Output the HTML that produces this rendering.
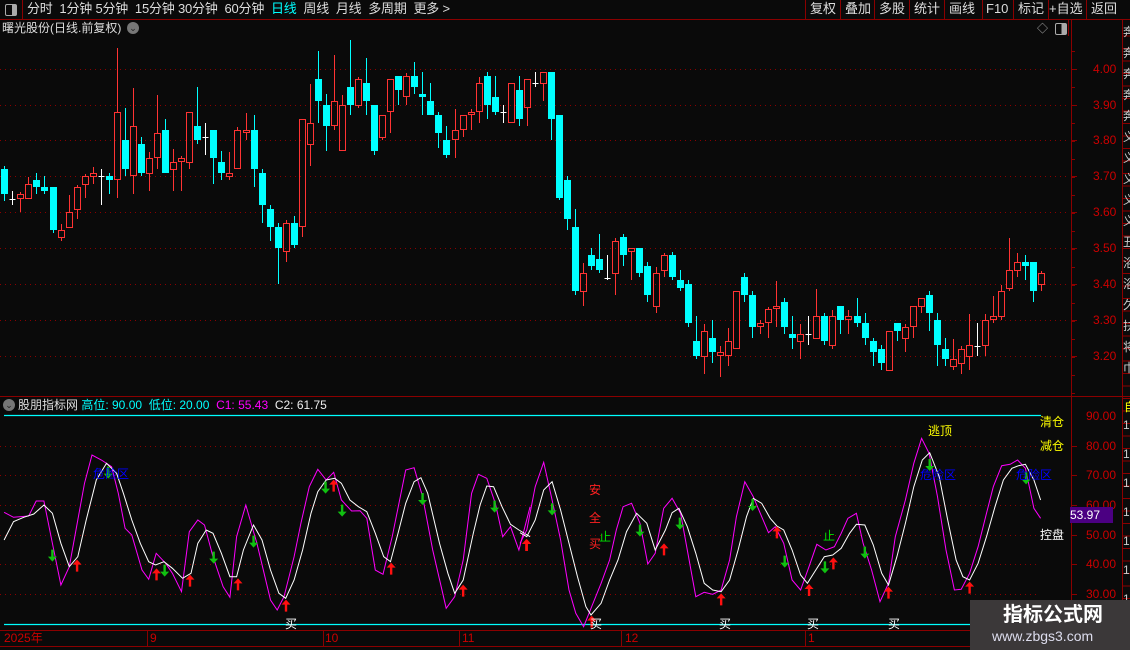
<!DOCTYPE html>
<html><head><meta charset="utf-8">
<style>
html,body{margin:0;padding:0;background:#0a0a0a;overflow:hidden}
body{width:1130px;height:650px;position:relative;font-family:"Liberation Sans","Noto Sans CJK SC",sans-serif}
.t{position:absolute;white-space:nowrap;font-size:12px;line-height:14px}
svg{position:absolute;left:0;top:0}
</style></head><body>
<svg id="s" width="1130" height="650" viewBox="0 0 1130 650"></svg>

<!-- top bar -->
<div class="t" style="left:0;top:0;width:22px;height:19px;border-right:1px solid #8b0000"></div>
<div class="t" style="left:5px;top:4px;width:10px;height:10px;border:1px solid #aaa;border-radius:2px;background:linear-gradient(90deg,#0a0a0a 60%,#aaa 60%)"></div>
<div class="t" style="left:27px;top:2px;color:#ddd;font-size:13px;letter-spacing:-0.2px">分时&nbsp; 1分钟&nbsp;5分钟&nbsp; 15分钟&nbsp;30分钟&nbsp; 60分钟&nbsp; <span style="color:#00ffff">日线</span>&nbsp; 周线&nbsp; 月线&nbsp; 多周期&nbsp; 更多 &gt;</div>
<div class="t" style="left:806px;top:2px;color:#ddd;font-size:13px">
<span style="position:absolute;left:4px">复权</span><span style="position:absolute;left:39px">叠加</span><span style="position:absolute;left:73px">多股</span><span style="position:absolute;left:108px">统计</span><span style="position:absolute;left:143px">画线</span><span style="position:absolute;left:180px">F10</span><span style="position:absolute;left:212px">标记</span><span style="position:absolute;left:243px">+自选</span><span style="position:absolute;left:285px">返回</span></div>
<div class="t" style="left:2px;top:21px;color:#ddd;font-size:12px">曙光股份(日线.前复权)</div>
<div class="t" style="left:127px;top:22px;width:12px;height:12px;border-radius:50%;background:#777;color:#222;font-size:9px;line-height:12px;text-align:center">⌄</div>
<div class="t" style="left:1037px;top:22px;color:#aaa;font-size:11px">◇</div>
<div class="t" style="left:1055px;top:23px;width:10px;height:10px;border:1px solid #aaa;border-radius:2px;background:linear-gradient(90deg,#0a0a0a 55%,#aaa 55%)"></div>

<!-- indicator header -->
<div class="t" style="left:3px;top:399px;width:12px;height:12px;border-radius:50%;background:#777;color:#222;font-size:9px;line-height:12px;text-align:center">⌄</div>
<div class="t" style="left:18px;top:398px;color:#ddd">股朋指标网 <span style="color:#00ffff">高位: 90.00&nbsp; 低位: 20.00</span>&nbsp; <span style="color:#ff00ff">C1: 55.43</span>&nbsp; <span style="color:#eee">C2: 61.75</span></div>

<!-- indicator labels -->
<div class="t" style="left:1040px;top:415px;color:#ffff00">清仓</div>
<div class="t" style="left:1040px;top:439px;color:#ffff00">减仓</div>
<div class="t" style="left:1040px;top:528px;color:#fff">控盘</div>
<div class="t" style="left:928px;top:424px;color:#ffff00">逃顶</div>
<div class="t" style="left:93px;top:467px;color:#0000ff">危险区</div>
<div class="t" style="left:920px;top:468px;color:#0000ff">危险区</div>
<div class="t" style="left:1016px;top:468px;color:#0000ff">危险区</div>
<div class="t" style="left:589px;top:483px;color:#ff2020">安</div>
<div class="t" style="left:589px;top:511px;color:#ff2020">全</div>
<div class="t" style="left:589px;top:537px;color:#ff2020">买</div>
<div class="t" style="left:599px;top:530px;color:#00e000">止</div>
<div class="t" style="left:823px;top:529px;color:#00e000">止</div>
<div class="t" style="left:285px;top:617px;color:#fff">买</div>
<div class="t" style="left:590px;top:617px;color:#fff">买</div>
<div class="t" style="left:719px;top:617px;color:#fff">买</div>
<div class="t" style="left:807px;top:617px;color:#fff">买</div>
<div class="t" style="left:888px;top:617px;color:#fff">买</div>

<!-- date axis -->
<div class="t" style="left:4px;top:631px;color:#cc0000">2025年</div>
<div class="t" style="left:150px;top:631px;color:#cc0000">9</div>
<div class="t" style="left:325px;top:631px;color:#cc0000">10</div>
<div class="t" style="left:462px;top:631px;color:#cc0000">11</div>
<div class="t" style="left:625px;top:631px;color:#cc0000">12</div>
<div class="t" style="left:808px;top:631px;color:#cc0000">1</div>

<!-- right axis -->
<div id="ax"></div>
<div id="strip" style="position:absolute;left:1123px;top:20px;width:7px;height:630px;overflow:hidden"></div>
<div class="t" style="left:1070px;top:507px;width:43px;height:16px;background:#4b0082;color:#fff;font-size:12px;line-height:16px">53.97</div>

<!-- watermark -->
<div class="t" style="left:970px;top:600px;width:160px;height:50px;background:#3b3839"></div>
<div class="t" style="left:1003px;top:603px;color:#fff;font-size:20px;line-height:24px;font-weight:bold">指标公式网</div>
<div class="t" style="left:992px;top:627px;color:#dde;font-size:14px;line-height:18px">www.zbgs3.com</div>

<script>
var S=[];
function L(x1,y1,x2,y2,c,w,d){S.push('<line x1="'+x1+'" y1="'+y1+'" x2="'+x2+'" y2="'+y2+'" stroke="'+c+'" stroke-width="'+(w||1)+'"'+(d?' stroke-dasharray="'+d+'"':'')+'/>');}
L(0,19.5,1130,19.5,'#8b0000');
[805,840,874,909,944,982,1013,1048,1086].forEach(function(x){L(x+.5,0,x+.5,19,'#8b0000');});
L(0,396.5,1130,396.5,'#8b0000');
L(1071.5,20,1071.5,650,'#8b0000');
L(1122.5,20,1122.5,650,'#8b0000');
L(1068.5,20,1068.5,36,'#8b0000');
L(0,630.5,1071,630.5,'#8b0000');L(0,646.5,1071,646.5,'#8b0000');
[147,323,459,621,805].forEach(function(x){L(x+.5,630,x+.5,646,'#8b0000');});
var py=[69,105,140,176,212,248,284,320,356];
py.forEach(function(y){L(0,y+.5,1068,y+.5,'#8b0000',1,'1,4');L(1071,y+.5,1077,y+.5,'#8b0000');});
for(var y=51;y<396;y+=18){L(1071,y+.5,1075,y+.5,'#8b0000');}
var iy=[446,475,505,535,564,594];
iy.forEach(function(y){L(0,y+.5,1040,y+.5,'#8b0000',1,'1,4');L(1071,y+.5,1077,y+.5,'#8b0000');});
for(var y=36;y<650;y+=12.5){L(1122,y,1130,y,'#8b0000');}
L(4,415.5,1041,415.5,'#00ffff',1.3);L(4,624.5,1068,624.5,'#00ffff',1.3);
var C=[['c',169,194,166,201],['w',199,199,191,205],['r',194,199,192,212],['r',184,199,177,199],['c',180,187,173,194],['c',187,191,176,194],['c',187,230,187,233],['r',230,238,224,241],['r',212,228,195,228],['r',187,210,185,219],['r',176,185,174,198],['r',173,177,167,184],['w',176,176,169,205],['c',176,180,173,194],['r',112,180,48,198],['c',140,169,108,176],['r',126,176,88,194],['c',144,173,137,176],['r',158,174,152,191],['r',133,158,95,169],['c',130,173,119,173],['r',162,170,149,191],['r',158,162,156,191],['r',112,163,112,169],['c',126,140,87,144],['w',137,137,123,155],['c',130,158,130,184],['c',162,173,151,180],['r',173,177,152,180],['r',130,169,127,169],['r',130,133,113,140],['c',130,169,115,187],['c',173,205,169,223],['c',209,227,205,241],['c',227,248,223,284],['r',223,252,220,262],['c',223,245,216,248],['r',119,227,119,237],['r',123,145,84,166],['c',79,101,51,123],['c',105,126,94,151],['r',101,126,55,130],['r',105,151,95,151],['c',87,105,40,115],['r',79,106,77,108],['c',83,101,58,115],['c',105,151,105,155],['r',115,138,115,140],['r',79,112,79,133],['c',76,90,76,105],['r',76,97,73,105],['c',76,87,62,94],['c',94,97,72,115],['c',101,115,83,115],['c',115,133,112,148],['c',140,155,126,158],['r',130,140,109,158],['r',115,130,115,137],['r',112,115,109,130],['r',83,112,77,123],['c',76,105,72,119],['c',97,112,76,115],['w',112,112,105,123],['r',83,123,83,123],['c',90,119,76,126],['r',79,108,79,126],['w',83,83,72,87],['r',72,84,72,101],['c',72,119,72,140],['c',115,198,115,200],['c',180,219,176,230],['c',227,291,209,295],['r',273,292,263,306],['c',255,266,248,270],['c',259,270,234,273],['w',278,278,255,280],['r',241,274,238,295],['c',237,255,234,266],['r',248,252,248,280],['c',248,273,248,277],['c',266,295,262,302],['r',273,307,267,313],['r',255,271,253,277],['c',255,277,252,280],['c',280,288,270,291],['c',284,323,280,327],['c',341,356,316,359],['r',331,357,324,374],['c',338,352,320,363],['r',352,356,346,377],['r',341,356,328,366],['r',291,349,291,349],['c',277,295,273,302],['c',295,327,291,338],['r',323,327,320,334],['r',309,323,307,338],['r',306,309,281,327],['c',302,327,298,334],['c',334,338,316,349],['r',334,342,324,359],['w',334,334,316,345],['r',316,339,289,339],['c',316,341,313,345],['r',316,346,310,349],['c',306,320,306,334],['r',316,320,310,334],['c',316,323,298,327],['c',323,338,313,345],['c',341,352,338,366],['c',349,363,345,370],['r',331,371,331,371],['c',323,331,323,341],['r',327,339,324,352],['r',306,327,306,338],['r',298,307,298,313],['c',295,313,291,331],['c',320,345,313,366],['c',349,359,338,366],['r',359,367,339,370],['r',349,364,346,374],['r',345,357,314,370],['w',346,346,323,356],['r',320,346,314,356],['r',316,320,296,323],['r',291,317,285,320],['r',270,289,238,291],['r',262,271,253,277],['c',262,266,255,280],['c',262,291,262,302],['r',273,285,271,291]];
C.forEach(function(k,i){var x=Math.round(4.3+8.04*i)+.5;var col=k[0]=='c'?'#00ffff':k[0]=='r'?'#ff3333':'#ffffff';
 if(k[3]<k[1])L(x,k[3],x,k[1],col);if(k[4]>k[2])L(x,k[2],x,k[4],col);
 if(k[0]=='w'){L(x-3,k[1]+.5,x+3,k[1]+.5,col);}
 else if(k[0]=='c'){S.push('<rect x="'+(x-3.5)+'" y="'+k[1]+'" width="7" height="'+Math.max(1,k[2]-k[1])+'" fill="#00ffff"/>');}
 else{S.push('<rect x="'+(x-3)+'" y="'+(k[1]+.5)+'" width="6" height="'+Math.max(1,k[2]-k[1]-1)+'" fill="none" stroke="#ff3333"/>');}
});
function P(pts,x0,c){var s=pts.map(function(p){return (x0+p[0]/2.958).toFixed(1)+','+(410+p[1]/3).toFixed(1)}).join(' ');S.push('<polyline points="'+s+'" fill="none" stroke="'+c+'" stroke-width="1"/>');}
P([[12,307],[40,322],[85,318],[107,273],[130,273],[155,400],[180,525],[205,470],[230,330],[250,220],[272,135],[300,150],[330,170],[350,250],[370,355],[390,375],[420,480],[440,508],[462,430],[490,460],[510,490],[537,545],[560,365],[585,330],[605,345],[630,440],[660,530],[680,562],[700,380],[727,285],[760,400],[800,570],[820,600],[840,560],[870,440],[890,340],[915,230],[940,178],[965,210],[987,187],[1010,270],[1040,303],[1065,302],[1085,325],[1110,480],[1133,493],[1160,380],[1200,180],[1225,173],[1250,260],[1280,420],[1320,595],[1345,560],[1370,450],[1395,250],[1415,193],[1440,205],[1465,280],[1487,380],[1510,350],[1535,420],[1568,290]],0,'#ff00ff');
P([[12,390],[40,335],[70,322],[100,312],[130,285],[155,310],[180,400],[205,470],[230,440],[255,330],[285,210],[315,160],[345,190],[365,250],[390,330],[415,400],[440,455],[460,465],[485,455],[510,475],[540,505],[565,490],[585,400],[610,360],[630,370],[655,430],[680,500],[700,500],[720,420],[750,345],[775,390],[800,480],[825,550],[845,565],[870,510],[895,420],[920,310],[940,245],[965,210],[990,205],[1010,220],[1035,270],[1060,290],[1085,305],[1110,370],[1135,440],[1155,455],[1180,360],[1200,280],[1225,215],[1245,203],[1265,250],[1300,400],[1325,490],[1345,550],[1370,510],[1400,370],[1420,285],[1440,228],[1460,230],[1485,290],[1510,343],[1535,360],[1568,380]],0,'#ffffff');
P([[0,400],[20,360],[45,230],[70,157],[95,270],[120,390],[145,540],[165,610],[188,650],[210,595],[240,520],[265,450],[285,360],[305,290],[330,280],[355,340],[378,462],[400,430],[425,295],[450,265],[475,310],[495,420],[520,560],[545,547],[570,553],[595,540],[620,450],[640,320],[665,215],[690,260],[715,320],[735,368],[755,350],[780,400],[805,510],[830,540],[855,470],[878,403],[905,420],[930,410],[950,370],[970,325],[995,310],[1015,400],[1040,480],[1065,575],[1090,520],[1110,380],[1140,270],[1165,160],[1188,85],[1210,130],[1235,260],[1260,420],[1285,540],[1305,538],[1330,490],[1355,410],[1380,310],[1400,230],[1425,167],[1450,163],[1472,150],[1495,175],[1520,295],[1540,325]],520,'#ff00ff');
P([[0,368],[20,380],[45,330],[70,240],[95,215],[120,300],[145,400],[170,500],[195,590],[210,615],[240,580],[265,510],[290,450],[315,365],[345,310],[375,340],[400,420],[430,360],[450,308],[470,295],[495,350],[520,430],[545,520],[570,540],[595,545],[620,510],[645,420],[670,320],[690,265],[715,280],[740,325],[760,348],[780,360],[805,420],[830,495],[850,520],[875,480],[900,440],[925,435],[950,415],[975,370],[995,343],[1020,345],[1045,405],[1070,490],[1090,525],[1115,440],[1140,340],[1165,230],[1190,150],[1212,128],[1240,200],[1265,330],[1290,450],[1310,500],[1330,510],[1355,460],[1380,380],[1405,290],[1430,210],[1455,175],[1475,167],[1495,163],[1520,210],[1540,270]],520,'#ffffff');
function A(zx,zy,x0,up){var x=x0+zx/2.958,y=410+zy/3;
 if(up){S.push('<path d="M'+(x-4.5)+','+(y-1)+' L'+x+','+(y-6)+' L'+(x+4.5)+','+(y-1)+' L'+(x+1.2)+','+(y-1)+' L'+(x+1.2)+','+(y+6)+' L'+(x-1.2)+','+(y+6)+' L'+(x-1.2)+','+(y-1)+'Z" fill="#ff1010"/>');}
 else{S.push('<path d="M'+(x-4.5)+','+(y+1)+' L'+x+','+(y+6)+' L'+(x+4.5)+','+(y+1)+' L'+(x+1.2)+','+(y+1)+' L'+(x+1.2)+','+(y-6)+' L'+(x-1.2)+','+(y-6)+' L'+(x-1.2)+','+(y+1)+'Z" fill="#10c010"/>');}}
[[155,437],[487,482],[632,443],[750,395],[963,233],[1012,302],[1250,267],[1463,290],[320,188]].forEach(function(p){A(p[0],p[1],0,false);});
[[228,467],[463,493],[562,512],[704,523],[846,587],[987,227],[1157,476],[1370,542],[1557,405]].forEach(function(p){A(p[0],p[1],0,true);});
[[95,298],[355,362],[473,341],[688,285],[783,455],[902,472],[1020,428],[1212,165],[1497,205]].forEach(function(p){A(p[0],p[1],520,false);});
[[20,405],[426,418],[595,568],[760,367],[855,540],[927,460],[1090,548],[1330,533],[212,635]].forEach(function(p){A(p[0],p[1],520,true);});
document.getElementById('s').innerHTML=S.join('');
var h='';var pl=['4.00','3.90','3.80','3.70','3.60','3.50','3.40','3.30','3.20'];
pl.forEach(function(t,i){h+='<div class="t" style="left:1093px;top:'+(py[i]-7)+'px;color:#cc0000;font-size:12px">'+t+'</div>';});
['90.00','80.00','70.00','60.00','50.00','40.00','30.00'].forEach(function(t,i){var y=[416,446,475,505,535,564,594][i];h+='<div class="t" style="left:1086px;top:'+(y-7)+'px;color:#cc0000;font-size:12px">'+t+'</div>';});
document.getElementById('ax').innerHTML=h;
var st='';var ch='奔奔奔奔奔义义义义义丑浴浴久扶将巾';for(var i=0;i<ch.length;i++){st+='<div class="t" style="left:0;top:'+(5+i*21)+'px;color:#ccc;font-size:12px">'+ch[i]+'</div>';}
st+='<div class="t" style="left:1px;top:380px;color:#ffff00;font-size:12px">自</div>';
for(var i=0;i<9;i++){st+='<div class="t" style="left:0;top:'+(398+i*29)+'px;color:#ccc;font-size:12px">1</div>';}
document.getElementById('strip').innerHTML=st;
</script>
</body></html>
